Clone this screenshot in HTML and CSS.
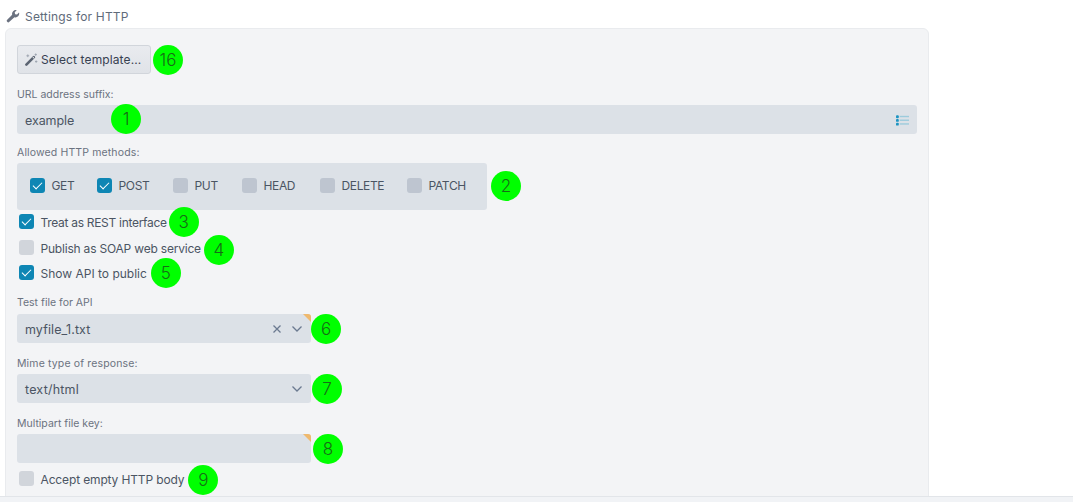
FILE: index.html
```html
<!DOCTYPE html>
<html lang="en">
<head>
<meta charset="utf-8">
<title>Settings for HTTP</title>
<link rel="stylesheet" href="styles.css">
</head>
<body>
<main class="page">
  <h2 class="title">
    <svg class="title-icon" viewBox="0 0 14 14" width="14" height="14"><path d="M1.200 12.800a1.500 1.500 0 0 1 0-2.100l5-4.900a3.700 3.700 0 0 1 4.600-4.600L8.700 3.300l.4 1.900 1.900.4 2-2.100a3.700 3.700 0 0 1-4.600 4.700l-5 4.600a1.500 1.500 0 0 1-2.200 0z" fill="#6b7280"/></svg>
    Settings for HTTP
  </h2>
  <section class="panel">
    <div class="row row-button">
      <button class="btn" type="button">
        <svg viewBox="0 0 14 14" width="13" height="13"><path d="M1.500 12.500l8-8" stroke="#5b6472" stroke-width="2.800" stroke-linecap="round"/><path d="M8.500 5.500l1-1" stroke="#e5e7eb" stroke-width="1.400"/><path d="M3 1.500v3M1.500 3h3M11.500 .5v2.500M10.300 1.700h2.500M12 8v2.500M10.800 9.200h2.500" stroke="#9ca3af" stroke-width="1"/></svg>
        Select template...
      </button>
      <span class="marker marker-16">16</span>
    </div>

    <label class="label label-url">URL address suffix:</label>
    <div class="field field-wide">
      <span class="value value-example">example</span>
      <span class="marker marker-1">1</span>
      <svg class="list-icon" viewBox="0 0 14 12" width="13" height="12"><g fill="#1d94c2"><rect x="0" y="1" width="3" height="3" rx="1"/><rect x="0" y="5" width="3" height="3" rx="1"/><rect x="0" y="9" width="3" height="3" rx="1"/></g><g fill="#9ccbdc"><rect x="4" y="1.500" width="10" height="1.500"/><rect x="4" y="5.500" width="10" height="1.500"/><rect x="4" y="9.500" width="10" height="1.500"/></g></svg>
    </div>

    <label class="label label-methods">Allowed HTTP methods:</label>
    <div class="row">
      <div class="methods">
        <span class="method method-get"><i class="cb on"></i>GET</span>
        <span class="method method-post"><i class="cb on"></i>POST</span>
        <span class="method method-put"><i class="cb dark"></i>PUT</span>
        <span class="method method-head"><i class="cb dark"></i>HEAD</span>
        <span class="method method-delete"><i class="cb dark"></i>DELETE</span>
        <span class="method method-patch"><i class="cb dark"></i>PATCH</span>
      </div>
      <span class="marker marker-2">2</span>
    </div>

    <div class="check check-rest"><i class="cb on"></i><span class="check-text">Treat as REST interface</span><span class="marker marker-3">3</span></div>
    <div class="check check-soap"><i class="cb"></i><span class="check-text">Publish as SOAP web service</span><span class="marker marker-4">4</span></div>
    <div class="check check-public"><i class="cb on"></i><span class="check-text">Show API to public</span><span class="marker marker-5">5</span></div>

    <label class="label label-test">Test file for API</label>
    <div class="row">
      <div class="field field-select required">
        <span class="value value-file">myfile_1.txt</span>
        <svg class="clear" viewBox="0 0 10 10" width="10" height="10"><path d="M1.500 1.500l7 7M8.500 1.500l-7 7" stroke="#6b7a90" stroke-width="1.300"/></svg>
        <svg class="chev" viewBox="0 0 12 8" width="12" height="8"><path d="M1.500 1.500L6 6l4.500-4.500" fill="none" stroke="#6b7a90" stroke-width="1.300"/></svg>
      </div>
      <span class="marker marker-6">6</span>
    </div>

    <label class="label label-next label-wider">Mime type of response:</label>
    <div class="row">
      <div class="field field-select">
        <span class="value value-mime">text/html</span>
        <svg class="chev chev-only" viewBox="0 0 12 8" width="12" height="8"><path d="M1.500 1.500L6 6l4.500-4.500" fill="none" stroke="#6b7a90" stroke-width="1.300"/></svg>
      </div>
      <span class="marker marker-7">7</span>
    </div>

    <label class="label label-next">Multipart file key:</label>
    <div class="row">
      <div class="field field-select required"></div>
      <span class="marker marker-8">8</span>
    </div>

    <div class="check check-empty"><i class="cb"></i><span class="check-text">Accept empty HTTP body</span><span class="marker marker-9">9</span></div>
  </section>
</main>
<footer class="bottom-bar"></footer>
</body>
</html>
```
FILE: styles.css
```css
* { box-sizing: border-box; }
html, body { height: 100%; }
body {
  margin: 0;
  background: #fff;
  font-family: Inter, "Noto Sans", sans-serif;
  color: #4b5563;
  overflow: hidden;
  position: relative;
}
.page { padding: 0 0 0 5px; width: 929px; }
.title {
  display: flex;
  align-items: center;
  gap: 5px;
  height: 28px;
  margin: 0;
  padding: 4px 0 0 1px;
  font-size: 12px;
  font-weight: 400;
  letter-spacing: .18px;
  color: #5f6b7a;
  white-space: nowrap;
}
.panel {
  height: 480px;
  padding: 16px 11px 0;
  background: #f3f4f6;
  border: 1px solid #e9ebee;
  border-radius: 6px;
}
.row { display: flex; align-items: center; }
.row-button { height: 29px; }
.btn {
  display: flex;
  align-items: center;
  gap: 3px;
  width: 134px;
  height: 29px;
  padding: 0 0 0 7px;
  font: 400 12px Inter, "Noto Sans", sans-serif;
  letter-spacing: .12px;
  color: #374151;
  background: linear-gradient(#e9ebef, #e0e3e8);
  border: 1px solid #d1d5db;
  border-radius: 3px;
}
.label {
  display: block;
  height: 14px;
  font-size: 10.500px;
  line-height: 16px;
  color: #6b7280;
  white-space: nowrap;
}
.label-url { margin: 13px 0 4px; }
.label-methods { margin: 11px 0 4px; letter-spacing: .14px; }
.label-test { margin: 15px 0 5px; }
.label-next { margin: 13px 0 4px; }
.label-wider { letter-spacing: .14px; }
.field {
  display: flex;
  align-items: center;
  height: 29px;
  padding: 0 8px;
  background: #dce1e7;
  border-radius: 3px;
  font-size: 12.500px;
  color: #4b5563;
}
.field-wide { width: 900px; }
.field-select { width: 294px; position: relative; overflow: hidden; }
.value { white-space: nowrap; padding-top: 2px; }
.value-example { letter-spacing: -.1px; }
.value-file { letter-spacing: .1px; }
.value-mime { letter-spacing: .2px; }
.required::after {
  content: "";
  position: absolute;
  top: 0;
  right: 0;
  border-style: solid;
  border-width: 0 8px 8px 0;
  border-color: transparent #efb96e transparent transparent;
}
.list-icon { margin-left: auto; }
.clear { margin-left: auto; }
.chev { margin-left: 9px; }
.chev-only { margin-left: auto; }
.methods {
  display: flex;
  align-items: center;
  width: 470px;
  height: 47px;
  padding: 0 0 2px 13px;
  background: #dce1e7;
  border-radius: 3px;
}
.method { display: flex; align-items: center; gap: 7px; font-size: 12px; letter-spacing: -.35px; color: #4b5563; }
.method-get { width: 67px; }
.method-post { width: 76px; }
.method-put { width: 69px; }
.method-head { width: 78px; }
.method-delete { width: 87px; }
.cb {
  flex: none;
  display: block;
  width: 14.500px;
  height: 14.500px;
  background: #d1d5db;
  border-radius: 3px;
  position: relative;
}
.cb.dark { background: #bec5d0; }
.cb.on { background: #0e86b4; }
.cb.on::after {
  content: "";
  position: absolute;
  left: 3px;
  top: 3.500px;
  width: 8px;
  height: 4px;
  border-left: 1.500px solid #fff;
  border-bottom: 1.500px solid #fff;
  transform: rotate(-45deg);
}
.check {
  display: flex;
  align-items: center;
  gap: 7px;
  height: 15px;
  margin-left: 2px;
  font-size: 12px;
  color: #4b5563;
  white-space: nowrap;
}
.check-text { padding-top: 2px; }
.check-rest { margin-top: 4px; }
.check-rest .check-text { letter-spacing: -.3px; }
.check-soap { margin-top: 11px; }
.check-soap .check-text { letter-spacing: -.2px; }
.check-public { margin-top: 10px; }
.check-empty { margin-top: 8px; }
.check-empty .check-text { letter-spacing: -.14px; }
.marker {
  flex: none;
  display: flex;
  align-items: center;
  justify-content: center;
  width: 30px;
  height: 30px;
  margin: -8px 0;
  border-radius: 50%;
  background: #00ff00;
  color: #176b17;
  font-size: 17px;
  font-weight: 300;
  letter-spacing: 0;
}
.marker-16 { margin-left: 2px; }
.marker-1 { margin: -10px 0 -8px 37px; }
.marker-2 { margin: -10px 0 -8px 4px; }
.marker-3 { margin-left: -5px; }
.marker-4 { margin: -6px 0 -10px -4px; }
.marker-5 { margin-left: -3px; }
.marker-6 { margin-left: 0; }
.marker-7 { margin-left: 1px; }
.marker-8 { margin-left: 2px; }
.marker-9 { margin: -7px 0 -9px -3px; }
.bottom-bar {
  position: absolute;
  left: 0;
  right: 0;
  bottom: 0;
  height: 6px;
  background: #f1f3f6;
  border-top: 1px solid #e2e5e9;
}
```
